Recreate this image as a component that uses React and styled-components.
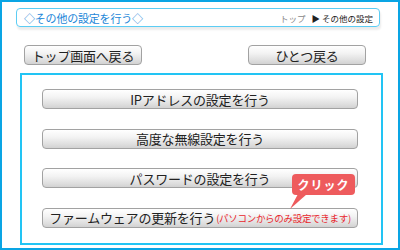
import React from 'react'
import styled, { createGlobalStyle } from 'styled-components'

const Global = createGlobalStyle`
  html, body {
    margin: 0;
    padding: 0;
    background: #fff;
  }
  body {
    font-family: "Noto Sans CJK JP", "Liberation Sans", sans-serif;
  }
`

const Frame = styled.div`
  box-sizing: border-box;
  width: 400px;
  height: 250px;
  border: 2px solid #0aa5e4;
  padding: 6px 0 0 14px;
`

const Header = styled.div`
  box-sizing: border-box;
  width: 364px;
  height: 19px;
  border: 1.5px solid #5ccdf4;
  border-radius: 4px;
  box-shadow: 1px 3px 2px rgba(0, 0, 0, 0.08);
  display: flex;
  align-items: center;
  justify-content: space-between;
  padding: 0 6px 0 7px;
`

const Title = styled.span`
  color: #1c86d8;
  font-size: 11px;
  letter-spacing: -0.2px;
`

const Crumbs = styled.span`
  font-size: 8.5px;
  color: #222;
  display: flex;
  gap: 6px;
  align-items: center;
`

const Crumb = styled.span`
  color: ${p => (p.$muted ? '#888' : '#222')};
`

const NavRow = styled.div`
  display: flex;
  justify-content: space-between;
  width: 342px;
  margin: 18px 0 0 8px;
`

const Button = styled.div`
  box-sizing: border-box;
  width: ${p => p.$w}px;
  height: 20px;
  border: 1px solid #a2a2a2;
  border-radius: 4px;
  background: linear-gradient(#ffffff 0%, #f3f3f3 40%, #dedede 80%, #d2d2d2 100%);
  display: flex;
  align-items: center;
  justify-content: center;
  font-size: 13px;
  color: #222;
  white-space: nowrap;
  letter-spacing: -0.2px;
`

const Panel = styled.div`
  position: relative;
  box-sizing: border-box;
  width: 363px;
  height: 172px;
  margin: 8px 0 0 4px;
  border: 2px solid #22c4f4;
  padding: 14px 0 0 20px;
  display: flex;
  flex-direction: column;
  gap: 19.5px;
`

const Note = styled.span`
  color: #e8262c;
  font-size: 9.5px;
  margin-left: 1px;
  letter-spacing: -0.3px;
`

const Tip = styled.div`
  position: absolute;
  left: 270px;
  top: 99px;
  width: 63px;
  height: 21px;
  background: #ee5b5d;
  border-radius: 4px;
  color: #fff;
  font-size: 12px;
  font-weight: 700;
  display: flex;
  align-items: center;
  justify-content: center;
  letter-spacing: 1px;
`

const Tail = styled.svg`
  position: absolute;
  left: -4px;
  top: 20px;
`

export default function App() {
  return (
    <>
      <Global />
      <Frame>
        <Header>
          <Title>◇その他の設定を行う◇</Title>
          <Crumbs>
            <Crumb $muted>トップ</Crumb>
            <Crumb>▶ その他の設定</Crumb>
          </Crumbs>
        </Header>
        <NavRow>
          <Button $w={118}>トップ画面へ戻る</Button>
          <Button $w={118}>ひとつ戻る</Button>
        </NavRow>
        <Panel>
          <Button $w={316}>IPアドレスの設定を行う</Button>
          <Button $w={316}>高度な無線設定を行う</Button>
          <Button $w={316}>パスワードの設定を行う</Button>
          <Button $w={316}>
            ファームウェアの更新を行う<Note>(パソコンからのみ設定できます)</Note>
          </Button>
          <Tip>
            クリック
            <Tail width="20" height="16" viewBox="0 0 20 16">
              <path d="M10 0 L19 0 L2 15 Z" fill="#ee5b5d" />
            </Tail>
          </Tip>
        </Panel>
      </Frame>
    </>
  )
}
